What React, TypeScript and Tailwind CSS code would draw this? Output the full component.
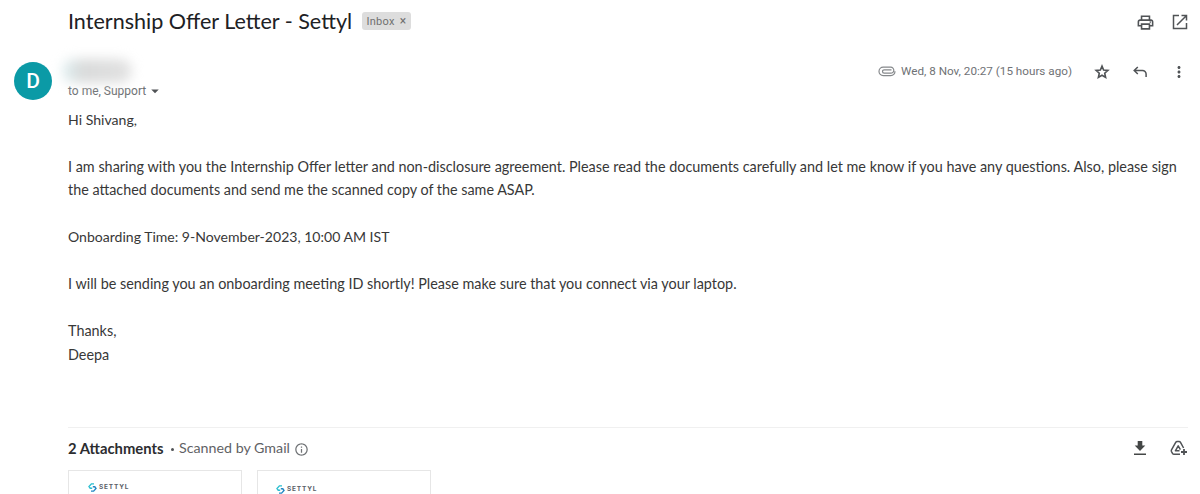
import { MdArrowDropDown, MdMoreVert, MdOutlineInfo, MdOutlinePrint } from 'react-icons/md';

type BodyLine = { text: string; size?: string };

const bodyLines: BodyLine[] = [
  { text: 'Hi Shivang,', size: 'text-[14.1px]' },
  { text: '' },
  {
    text: 'I am sharing with you the Internship Offer letter and non-disclosure agreement. Please read the documents carefully and let me know if you have any questions. Also, please sign',
  },
  { text: 'the attached documents and send me the scanned copy of the same ASAP.', size: 'text-[14.35px]' },
  { text: '' },
  { text: 'Onboarding Time: 9-November-2023, 10:00 AM IST', size: 'text-[14.05px]' },
  { text: '' },
  { text: 'I will be sending you an onboarding meeting ID shortly! Please make sure that you connect via your laptop.' },
  { text: '' },
  { text: 'Thanks,' },
  { text: 'Deepa', size: 'pt-px' },
];

function OpenIcon() {
  return (
    <svg width="16" height="16" viewBox="0 0 16 16" fill="none" stroke="#505356" strokeWidth="1.5">
      <path d="M7 1.5H1.5v13h13V9M9.5 1.5h5v5M14.3 1.7 5 11" />
    </svg>
  );
}

function ClipIcon() {
  return (
    <svg width="18" height="11" viewBox="0 0 18 11" fill="none" stroke="#85888b" strokeWidth="1.2">
      <path d="M13.5 3.8H6.2a1.7 1.7 0 0 0 0 3.4h6.6a3 3 0 0 0 0-6H5.2a4.2 4.2 0 0 0 0 8.4h7.6a4.2 4.2 0 0 0 4.2-4.3" />
    </svg>
  );
}

function StarIcon() {
  return (
    <svg width="18" height="18" viewBox="0 0 18 18" fill="none" stroke="#505356" strokeWidth="1.6">
      <path d="m9 3.1 1.6 3.9 4.3.4-3.2 2.8.9 4.2L9 12.2l-3.6 2.2.9-4.2-3.2-2.8 4.3-.4z" />
    </svg>
  );
}

function ReplyIcon() {
  return (
    <svg width="14" height="12" viewBox="0 0 14 12" fill="none" stroke="#505356" strokeWidth="1.5">
      <path d="M4.8 1 1.2 4.5 4.8 8M1.2 4.5H9.5a3.6 3.6 0 0 1 3.6 3.6V11" />
    </svg>
  );
}

function DownloadIcon() {
  return (
    <svg width="12" height="15" viewBox="0 0 12 15" fill="#444746">
      <path d="M3.7 0h4.6v4.5h3L6 10 .7 4.5h3zM0 12.5h12V14H0z" />
    </svg>
  );
}

function DriveIcon() {
  return (
    <svg width="18" height="16" viewBox="0 0 18 16" fill="none" stroke="#505356" strokeWidth="1.5" strokeLinejoin="round">
      <path d="M10 14.2H4Q3 14.2 2.5 13.3L1.5 11.6Q1 10.7 1.5 9.8L5.7 2.4Q6.2 1.5 7.2 1.5H9Q10 1.5 10.5 2.4L13.6 8" />
      <path d="M9.5 10.8H5.4l2.8-4.9 2.2 3.8" />
      <path d="M14 9v6M11 12h6" strokeWidth="1.8" />
    </svg>
  );
}

function SettylLogo() {
  return (
    <div className="flex items-center gap-[2px]">
      <svg width="9" height="9" viewBox="0 0 9 9" fill="none" strokeWidth="1.4">
        <path d="M6 .9H3.4L1 3.5l1.2 1.7h2" stroke="#2bbfd0" />
        <path d="M3 8.1h2.6L8 5.5 6.8 3.8h-2" stroke="#2488c4" />
      </svg>
      <span className="font-['Inter',sans-serif] text-[6.5px] leading-[9px] font-bold tracking-[0.8px] text-[#5b6068]">SETTYL</span>
    </div>
  );
}

export default function App() {
  return (
    <div className="h-[494px] w-[1200px] overflow-hidden bg-white font-['Roboto',sans-serif] text-[#202124]">
      <header className="flex h-[42px] items-center pr-3 pl-[68px]">
        <h1 className="w-[284px] font-['Lato',sans-serif] text-[21.55px] leading-[26px] whitespace-nowrap">
          Internship Offer Letter - Settyl
        </h1>
        <span className="ml-[10px] flex h-[18px] w-[49px] items-center justify-center gap-[5px] rounded-[3px] bg-[#dddddd] pt-px text-[11px] leading-[17px] tracking-[0.3px] text-[#707070]">
          Inbox <span className="text-[12px]">×</span>
        </span>
        <div className="ml-auto flex items-center gap-[17px] pt-[2px]">
          <MdOutlinePrint size={19} color="#505356" />
          <OpenIcon />
        </div>
      </header>

      <section className="flex h-[66px] pr-3 pl-[14px]">
        <div className="mt-[20px] flex size-[38px] items-center justify-center rounded-full bg-[#0b9aa6] pt-[2px] text-[21px] font-medium text-white">
          D
        </div>
        <div className="ml-4 flex flex-col pt-[17px]">
          <div className="-ml-[6px] h-[24px] w-[70px] rounded-full bg-linear-to-r from-[#dff1f3] via-[#d9dada] via-30% to-[#e2e2e2] blur-[6px]" />
          <div className="flex h-[15px] items-center text-[12px] text-[#6f7275]">
            to me, Support <MdArrowDropDown size={18} color="#505356" />
          </div>
        </div>
        <div className="ml-auto flex h-[59px] items-center text-[11.7px] text-[#6f7275]">
          <ClipIcon />
          <span className="ml-[5px] w-[172px] whitespace-nowrap">Wed, 8 Nov, 20:27 (15 hours ago)</span>
          <span className="ml-5"><StarIcon /></span>
          <span className="ml-[22px]"><ReplyIcon /></span>
          <MdMoreVert size={18} color="#505356" className="ml-[23px]" />
        </div>
      </section>

      <main className="h-[319px] pl-[68px] font-['Lato',sans-serif] text-[14.4px] leading-[23.45px] text-[#383838]">
        {bodyLines.map((line, i) => (
          <p key={i} className={`h-[23.45px] whitespace-nowrap ${line.size ?? ''}`}>{line.text}</p>
        ))}
      </main>

      <footer className="mr-3 ml-[68px] border-t border-[#f0f0f0]">
        <div className="flex h-[42px] items-center font-['Lato',sans-serif] text-[14.25px]">
          <span className="w-[96px] pb-[2px] text-[14.8px] font-bold whitespace-nowrap text-[#2c2d30]">2 Attachments</span>
          <span className="ml-[7px] size-[3px] rounded-full bg-[#505356]" />
          <span className="ml-[5px] pb-[2px] text-[#5f6265]">Scanned by Gmail</span>
          <MdOutlineInfo size={15} color="#707376" className="ml-1" />
          <div className="ml-auto flex items-center gap-6 pb-[2px]">
            <DownloadIcon />
            <DriveIcon />
          </div>
        </div>
        <div className="flex gap-[15px]">
          <div className="h-[40px] w-[174px] border border-[#e6e6e6] pt-[12px] pl-[19px]">
            <SettylLogo />
          </div>
          <div className="h-[40px] w-[174px] border border-[#e6e6e6] pt-[14px] pl-[18px]">
            <SettylLogo />
          </div>
        </div>
      </footer>
    </div>
  );
}
